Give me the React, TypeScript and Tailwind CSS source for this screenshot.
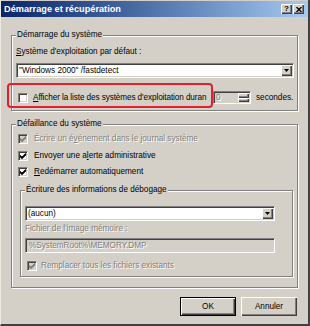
import React from 'react';

const font = "font-['Liberation_Sans',Arial,sans-serif]";
const sunken = 'border border-t-[#808080] border-l-[#808080] border-b-white border-r-white shadow-[inset_1px_1px_0_#404040,inset_-1px_-1px_0_#d4d0c8]';
const raised = 'bg-[#d4d0c8] shadow-[inset_1px_1px_0_#fff,inset_-1px_-1px_0_#404040,inset_-2px_-2px_0_#808080]';
const disabledText = 'text-[#808080] [text-shadow:1px_1px_0_#fff]';

const Check = ({ color }: { color: string }) => (
  <svg width="8" height="8" viewBox="0 0 8 8">
    <path d="M1 3.5 L3 5.5 L7 1.5 M1 4.5 L3 6.5 L7 2.5" stroke={color} strokeWidth="1.2" fill="none" />
  </svg>
);

const Checkbox = ({ checked = false, disabled = false }: { checked?: boolean; disabled?: boolean }) => (
  <div className={`w-[10px] h-[10px] flex items-center justify-center shrink-0 ${sunken} ${disabled ? 'bg-[#d4d0c8]' : 'bg-white'}`}>
    {checked && <Check color={disabled ? '#808080' : '#000'} />}
  </div>
);

const ArrowButton = () => (
  <div className={`w-[11px] h-full flex items-center justify-center ${raised}`}>
    <svg width="5" height="3" viewBox="0 0 5 3">
      <path d="M0 0 H5 L2.5 3 Z" fill="#000" />
    </svg>
  </div>
);

const Select = ({ value, width }: { value: string; width: string }) => (
  <div className={`${width} h-[15px] bg-white flex items-center ${sunken} pr-[1px] py-[1px]`}>
    <span className="flex-1 pl-[2px] whitespace-nowrap">{value}</span>
    <ArrowButton />
  </div>
);

const Group = ({ label, className, children }: { label: string; className: string; children: React.ReactNode }) => (
  <div className={`relative border border-[#808080] shadow-[1px_1px_0_#fff,inset_1px_1px_0_#fff] ${className}`}>
    <span className="absolute -top-[6px] left-[4px] px-[1px] bg-[#d4d0c8] leading-[10px] whitespace-nowrap">{label}</span>
    {children}
  </div>
);

export default function App() {
  return (
    <div className={`w-[310px] h-[326px] bg-[#d4d0c8] text-[8.2px] leading-[10px] text-black flex flex-col border-l border-l-[#ece9e2] border-r-2 border-r-[#404040] border-b-2 border-b-[#404040] ${font}`}>
      {/* Title bar */}
      <div className="h-[16px] mt-[1px] flex items-center bg-gradient-to-r from-[#0a246a] to-[#a6caf0] pl-[3px] pr-[4px]">
        <span className="flex-1 text-white font-bold text-[9.2px] whitespace-nowrap">Démarrage et récupération</span>
        <div className={`w-[11px] h-[10px] flex items-center justify-center font-bold text-[8px] ${raised}`}>?</div>
        <div className={`w-[11px] h-[10px] ml-[1px] flex items-center justify-center ${raised}`}>
          <svg width="6" height="5" viewBox="0 0 6 5">
            <path d="M0.5 0 L5.5 5 M5.5 0 L0.5 5" stroke="#000" strokeWidth="1.3" />
          </svg>
        </div>
      </div>

      <div className="px-[10px]">
        {/* Démarrage du système */}
        <Group label="Démarrage du système" className="mt-[18px] h-[76px]">
          <div className="pl-[4px] pt-[11px]">
            <div><span className="underline">S</span>ystème d'exploitation par défaut :</div>
            <div className="mt-[6px]">
              <Select value={'"Windows 2000" /fastdetect'} width="w-[278px]" />
            </div>
            <div className="relative mt-[13px] h-[13px] flex items-center">
              <div className="ml-[2px]"><Checkbox /></div>
              <div className="ml-[5px] w-[177px] whitespace-nowrap tracking-[-0.1px]"><span className="underline">A</span>fficher la liste des systèmes d'exploitation duran</div>
              <div className={`ml-[3px] w-[38px] h-[13px] flex items-center ${sunken} bg-[#d4d0c8] pr-[1px] py-[1px]`}>
                <span className={`flex-1 pl-[2px] ${disabledText}`}>0</span>
                <div className="w-[11px] h-full flex flex-col">
                  <div className={`flex-1 ${raised}`} />
                  <div className={`flex-1 ${raised}`} />
                </div>
              </div>
              <span className="ml-[5px]">secondes.</span>
              <div className="absolute -left-[9px] -top-[8px] w-[206px] h-[25px] rounded-[4px] border-2 border-[#e3202c]" />
            </div>
          </div>
        </Group>

        {/* Défaillance du système */}
        <Group label="Défaillance du système" className="mt-[13px] h-[164px]">
          <div className="pl-[6px] pr-[4px] pt-[6px]">
            <div className="h-[16px] flex items-center">
              <Checkbox checked disabled />
              <span className={`ml-[6px] ${disabledText}`}>Écrire un é<span className="underline">v</span>énement dans le journal système</span>
            </div>
            <div className="h-[17px] flex items-center">
              <Checkbox checked />
              <span className="ml-[6px]">Envoyer une a<span className="underline">l</span>erte administrative</span>
            </div>
            <div className="h-[16px] flex items-center">
              <Checkbox checked />
              <span className="ml-[6px]"><span className="underline">R</span>edémarrer automatiquement</span>
            </div>

            <Group label="Écriture des informations de débogage" className="mt-[10px] ml-[2px] h-[87px]">
              <div className="pl-[4px] pt-[15px]">
                <Select value="(aucun)" width="w-[250px]" />
                <div className={`mt-[3px] ${disabledText}`}>Fichier de l'image mémoire :</div>
                <div className={`mt-[4px] w-[250px] h-[15px] flex items-center pl-[3px] ${sunken} bg-[#d4d0c8] ${disabledText}`}>
                  %SystemRoot%\MEMORY.DMP
                </div>
                <div className="mt-[7px] ml-[2px] h-[12px] flex items-center">
                  <Checkbox checked disabled />
                  <span className={`ml-[4px] ${disabledText}`}>Remplacer tous les fichiers existants</span>
                </div>
              </div>
            </Group>
          </div>
        </Group>

        {/* Buttons */}
        <div className="mt-[9px] flex justify-end gap-[5px] pr-[1px]">
          <button className={`w-[56px] h-[19px] border border-black ${raised}`}>OK</button>
          <button className={`w-[56px] h-[19px] ${raised}`}>Annuler</button>
        </div>
      </div>
    </div>
  );
}
